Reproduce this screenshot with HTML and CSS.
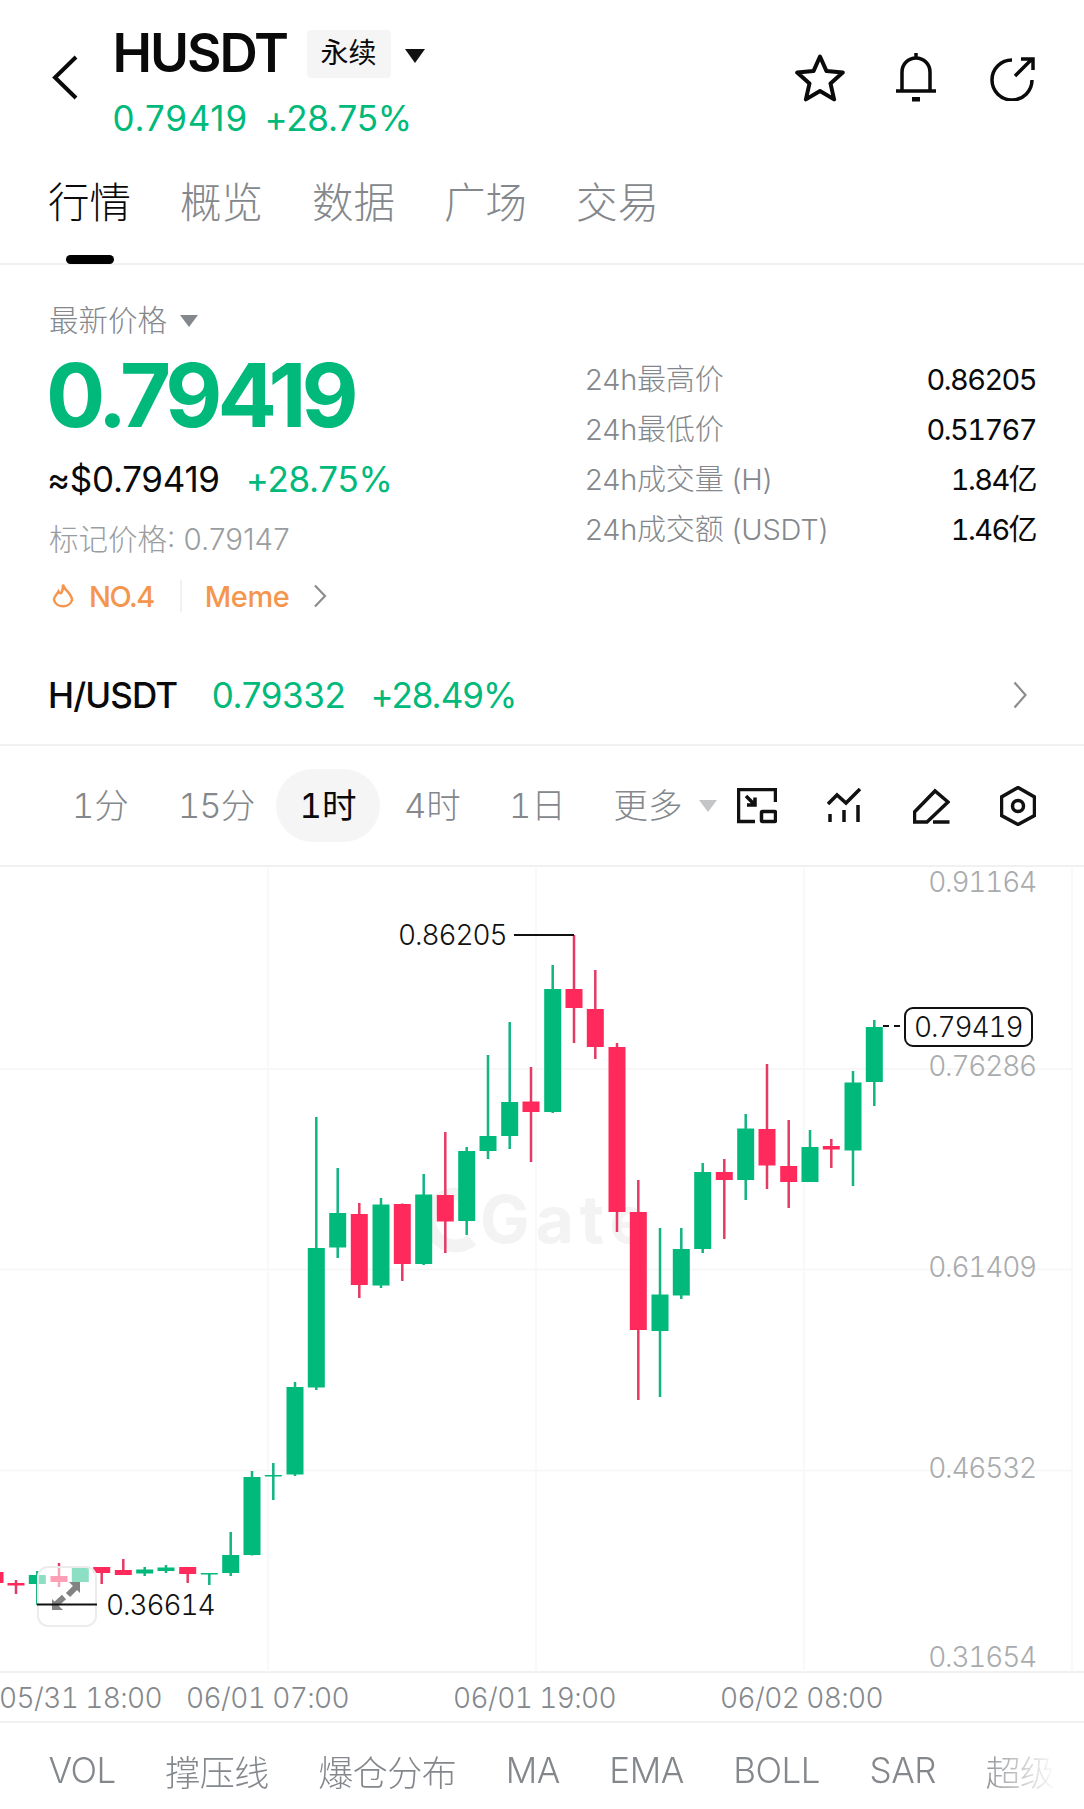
FILE: index.html
```html
<!DOCTYPE html>
<html lang="zh-CN">
<head>
  <meta charset="UTF-8" />
  <meta name="viewport" content="width=device-width, initial-scale=1.0"/>
  <title>HUSDT 永续</title>
  <link rel="stylesheet" href="styles.css">
</head>
<body>

  <header class="topbar">
    <svg class="back" width="26" height="45" viewBox="0 0 26 45"><path d="M24 2 3 22.5 24 43" /></svg>
    <div class="title-block">
      <div class="title-line">
        <span class="symbol">HUSDT</span>
        <span class="badge">永续</span>
        <span class="caret caret-dark"></span>
      </div>
      <div class="quote-line up">
        <span class="quote-price">0.79419</span>
        <span>+28.75%</span>
      </div>
    </div>
    <div class="top-actions">
      <svg class="ic-star" width="50" height="48" viewBox="0 0 50 48"><path d="M25 2.500 31.500 17.100 47.800 18.600 35.500 29.400 39.100 45.400 25 37 10.900 45.400 14.500 29.400 2.200 18.600 18.500 17.100Z" /></svg>
      <svg class="ic-bell" width="42" height="50" viewBox="0 0 42 50"><path d="M21 1V6M7 38V20a14 14 0 0 1 28 0V38M1 39H41" /><rect class="solid" x="17" y="45" width="8" height="4.500" /></svg>
      <svg class="ic-share" width="46" height="44" viewBox="0 0 46 44"><path d="M22 3A20 20 0 1 0 42 23M25 19 42 2M31 2H43V13" /></svg>
    </div>
  </header>

  <nav class="tabs">
    <a class="tab active">行情</a>
    <a class="tab">概览</a>
    <a class="tab">数据</a>
    <a class="tab">广场</a>
    <a class="tab">交易</a>
  </nav>

  <section class="summary">
    <div class="summary-left">
      <div class="last-label">最新价格 <span class="caret caret-grey"></span></div>
      <div class="last-price">0.79419</div>
      <div class="fiat-line">
        <span>≈$0.79419</span>
        <span class="up">+28.75%</span>
      </div>
      <div class="mark-line">标记价格: 0.79147</div>
      <div class="tag-line">
        <svg class="flame" width="22" height="26" viewBox="0 0 22 26"><path d="M11 1.500C12 7 20 10.500 20 17a9.200 8 0 0 1-18 0C2 13 5 11.500 6.500 8.500 7.500 10.500 8.500 10.500 9.500 9.500 11 7 11 4.500 11 1.500Z" /></svg>
        <span class="tag-rank">NO.4</span>
        <span class="tag-sep"></span>
        <span class="tag-name">Meme</span>
        <svg class="chev chev-grey" width="14" height="24" viewBox="0 0 14 24"><path d="M2 1.500 12 12 2 22.500" /></svg>
      </div>
    </div>
    <dl class="stats">
      <div class="stat"><dt>24h最高价</dt><dd>0.86205</dd></div>
      <div class="stat"><dt>24h最低价</dt><dd>0.51767</dd></div>
      <div class="stat"><dt>24h成交量 (H)</dt><dd>1.84亿</dd></div>
      <div class="stat"><dt>24h成交额 (USDT)</dt><dd>1.46亿</dd></div>
    </dl>
  </section>

  <div class="pair-row">
    <span class="pair-name">H/USDT</span>
    <span class="up pair-price">0.79332</span>
    <span class="up pair-pct">+28.49%</span>
    <svg class="chev chev-light" width="14" height="28" viewBox="0 0 14 28"><path d="M1.500 1.500 12.500 14 1.500 26.500" /></svg>
  </div>

  <div class="period-row">
    <a class="period p-1m">1分</a>
    <a class="period p-15m">15分</a>
    <a class="period p-1h current">1时</a>
    <a class="period p-4h">4时</a>
    <a class="period p-1d">1日</a>
    <a class="period p-more">更多</a>
    <span class="caret caret-light"></span>
    <div class="chart-tools">
      <svg width="40" height="36" viewBox="0 0 40 36"><path d="M38.500 14V1.500H1.500V33.500H18M9 8 18 17M18 9.500V17H10" /><rect x="24.500" y="23.500" width="14" height="10" rx="1" /></svg>
      <svg width="36" height="36" viewBox="0 0 36 36"><path d="M1 16 10 7 19 15 33 1M3 26V34M17 22V34M31 17V34" /></svg>
      <svg width="37" height="36" viewBox="0 0 37 36"><path d="M1.500 24 22 3 35 14 14 34H1.500ZM20 34H36.500" /></svg>
      <svg width="36" height="40" viewBox="0 0 36 40"><path d="M18 1.500 34.500 11V29.500L18 38.500 1.500 29.500V11Z" /><circle cx="18" cy="20" r="5.500" /></svg>
    </div>
  </div>

  <div class="chart">
    <svg class="plot" width="1084" height="805" viewBox="0 867 1084 805">
      <g class="watermark">
        <path class="wm-ring" d="M472 1200A26 26 0 1 0 472 1240" />
        <text x="480" y="1243">Gate</text>
      </g>
      <path class="grid-h" d="M0 1069H1072M0 1269.500H1072M0 1470.500H1072" />
      <path class="grid-v" d="M268 867V1672M536 867V1672M804 867V1672M1072 867V1672" />
      <g id="candles"></g>
      <rect class="zoom-btn" x="38" y="1567" width="58" height="59" rx="10" />
      <path class="zoom-arrows" d="M68 1595 78 1585M53 1607 64 1597" />
      <path class="zoom-heads" d="M80 1582V1593L69 1582ZM52 1610V1599L63 1610Z" />
      <path class="hi-lo" d="M514 935H574M37 1604.500H97" />
      <path class="last-dash" d="M883 1026H902" />
      <rect class="last-box" x="905" y="1008" width="127" height="38" rx="8" />
      <text class="chart-label" x="398" y="945">0.86205</text>
      <text class="chart-label" x="106" y="1615">0.36614</text>
      <text class="chart-label" x="914" y="1037">0.79419</text>
      <text class="axis-label" x="1036" y="892">0.91164</text>
      <text class="axis-label" x="1036" y="1076">0.76286</text>
      <text class="axis-label" x="1036" y="1277">0.61409</text>
      <text class="axis-label" x="1036" y="1478">0.46532</text>
      <text class="axis-label" x="1036" y="1667">0.31654</text>
    </svg>
  </div>

  <div class="time-axis">
    <span class="t-a">05/31 18:00</span>
    <span class="t-b">06/01 07:00</span>
    <span class="t-c">06/01 19:00</span>
    <span class="t-d">06/02 08:00</span>
  </div>

  <div class="indicators">
    <a>VOL</a>
    <a>撑压线</a>
    <a>爆仓分布</a>
    <a>MA</a>
    <a>EMA</a>
    <a>BOLL</a>
    <a>SAR</a>
    <a>超级</a>
  </div>

  <script src="chart.js"></script>
</body>
</html>
```

FILE: styles.css
```css
:root {
  --green: #00b97a;
  --red: #ff2a5b;
  --text: #0a0a0a;
  --muted: #84888c;
  --soft: #9a9da0;
  --line: #f1f1f2;
  --orange: #f5964f;
}

* {
  box-sizing: border-box;
}

html, body {
  height: 1809px;
  overflow: hidden;
}

body {
  margin: 0;
  background: #fff;
  color: var(--text);
  font-family: Inter, "Noto Sans CJK SC", sans-serif;
}

svg {
  display: block;
  fill: none;
  stroke: currentColor;
  stroke-width: 3.5;
}

a {
  color: inherit;
}

.up {
  color: var(--green);
}

.caret {
  display: inline-block;
  width: 0;
  height: 0;
  border-left: 10px solid transparent;
  border-right: 10px solid transparent;
}

.caret-dark {
  margin-left: 14px;
  margin-top: 6px;
  border-top: 14px solid #111;
}

.caret-grey {
  margin-left: 13px;
  margin-top: 6px;
  border-left-width: 9px;
  border-right-width: 9px;
  border-top: 12px solid var(--muted);
}

.caret-light {
  margin-left: 16px;
  border-left-width: 9px;
  border-right-width: 9px;
  border-top: 12px solid #c4c5c7;
}

/* top bar */
.topbar {
  height: 150px;
  display: flex;
  padding: 0 48px 0 52px;
}

.back {
  margin-top: 55px;
  stroke-width: 4;
}

.title-block {
  margin-left: 34.500px;
  padding-top: 25px;
}

.title-line {
  display: flex;
  align-items: center;
  height: 56px;
}

.symbol {
  font-size: 53px;
  font-weight: 600;
  letter-spacing: -2px;
  line-height: 56px;
}

.badge {
  margin-left: 19.500px;
  margin-top: 2px;
  width: 84px;
  height: 48px;
  background: #f5f5f5;
  border-radius: 4px;
  font-size: 28px;
  line-height: 46px;
  text-align: center;
}

.quote-line {
  display: flex;
  gap: 16.500px;
  margin-top: 17px;
  font-size: 35px;
  line-height: 40px;
  letter-spacing: -0.2px;
}

.quote-price {
  letter-spacing: 0.800px;
}

.top-actions {
  margin-left: auto;
  display: flex;
  padding-top: 52px;
}

.ic-star {
  margin-top: 2px;
  stroke-width: 4;
  stroke-linejoin: round;
}

.ic-bell {
  margin-left: 50px;
}

.ic-share {
  margin-top: 5px;
  margin-left: 53px;
}

.solid {
  fill: currentColor;
  stroke: none;
}

/* main tabs */
.tabs {
  height: 115px;
  display: flex;
  gap: 49px;
  padding: 24px 0 0 48px;
  border-bottom: 2px solid var(--line);
}

.tab {
  position: relative;
  height: 59px;
  font-size: 41.500px;
  line-height: 59px;
  color: var(--muted);
  font-weight: 300;
}

.tab.active {
  color: var(--text);
}

.tab.active::after {
  content: "";
  position: absolute;
  left: 18px;
  top: 81px;
  width: 48px;
  height: 9px;
  border-radius: 5px;
  background: #000;
}

/* price summary */
.summary {
  height: 375px;
  display: flex;
  padding: 0 48px 0 49px;
}

.summary-left {
  width: 536px;
  padding-top: 35px;
}

.last-label {
  display: flex;
  align-items: center;
  height: 40px;
  padding-bottom: 4px;
  font-size: 29.500px;
  color: var(--muted);
  font-weight: 300;
}

.last-price {
  margin-top: 5px;
  margin-left: -3px;
  height: 100px;
  font-size: 88px;
  font-weight: 700;
  line-height: 100px;
  letter-spacing: -5px;
  color: var(--green);
}

.fiat-line {
  display: flex;
  gap: 26px;
  margin-top: 12px;
  margin-left: -2px;
  height: 44px;
  font-size: 35px;
  line-height: 44px;
  letter-spacing: -0.3px;
}

.mark-line {
  margin-top: 18px;
  height: 40px;
  font-size: 29.500px;
  line-height: 40px;
  color: var(--soft);
  font-weight: 300;
}

.tag-line {
  display: flex;
  align-items: center;
  margin-top: 17px;
  height: 40px;
  font-size: 29px;
  font-weight: 500;
  color: var(--orange);
  letter-spacing: -0.4px;
}

.flame {
  margin-left: 3px;
  stroke-width: 2.500;
}

.tag-rank {
  margin-left: 15px;
  letter-spacing: -1.500px;
}

.tag-sep {
  margin: 0 23px 0 26px;
  width: 2px;
  height: 32px;
  background: var(--line);
}

.chev {
  stroke-width: 2.200;
}

.chev-grey {
  margin-left: 24px;
  color: #8b8d90;
}

.stats {
  flex: 1;
  margin: 0;
  padding-top: 90px;
}

.stat {
  display: flex;
  justify-content: space-between;
  height: 50px;
  font-size: 29px;
  line-height: 50px;
}

.stat dt {
  color: var(--muted);
  font-weight: 300;
  letter-spacing: -0.2px;
}

.stat dd {
  margin: 0;
  letter-spacing: -1.600px;
  font-variant-numeric: tabular-nums;
}

/* spot pair */
.pair-row {
  height: 106px;
  display: flex;
  align-items: center;
  padding: 6px 57px 0 48px;
  border-bottom: 2px solid var(--line);
  font-size: 35px;
  letter-spacing: -0.4px;
}

.pair-name {
  font-weight: 500;
  letter-spacing: -0.900px;
}

.pair-price {
  margin-left: 34.500px;
}

.pair-pct {
  margin-left: 25px;
  letter-spacing: -1px;
}

.chev-light {
  margin-left: auto;
  color: #8b8d90;
}

/* period row */
.period-row {
  height: 121px;
  display: flex;
  align-items: center;
  padding: 0 48px 0 0;
  border-bottom: 2px solid var(--line);
  font-size: 34.500px;
  color: var(--muted);
  font-weight: 300;
  font-variant-numeric: tabular-nums;
}

.period {
  display: block;
  flex: none;
  text-align: center;
  white-space: nowrap;
  line-height: 73px;
  height: 73px;
}

.p-1m {
  margin-left: 72px;
  width: 53px;
}

.p-15m {
  margin-left: 53px;
  width: 71px;
  letter-spacing: -1px;
}

.p-1h {
  margin-left: 27px;
  width: 104px;
  border-radius: 37px;
  background: #f5f5f5;
}

.p-1h.current {
  color: var(--text);
  font-weight: 400;
}

.p-4h {
  margin-left: 24px;
  width: 55px;
}

.p-1d {
  margin-left: 50px;
  width: 50px;
}

.p-more {
  margin-left: 54px;
  width: 70px;
}

.chart-tools {
  margin-left: auto;
  display: flex;
  gap: 50px;
  align-items: center;
  color: #111;
}

/* chart */
.chart {
  height: 806px;
  border-bottom: 2px solid var(--line);
}

.plot {
  stroke: none;
  overflow: visible;
}

.watermark {
  fill: #f3f3f3;
  font-size: 66px;
  font-weight: 700;
  letter-spacing: 6px;
}

.wm-ring {
  fill: none;
  stroke: #f3f3f3;
  stroke-width: 13;
}

.grid-h {
  stroke: #f5f5f6;
  stroke-width: 1.500;
}

.grid-v {
  stroke: #f8f8f9;
  stroke-width: 1.500;
}

.zoom-btn {
  fill: rgba(255, 255, 255, 0.55);
  stroke: #ececec;
  stroke-width: 2;
}

.zoom-arrows {
  stroke: #838383;
  stroke-width: 6;
}

.zoom-heads {
  fill: #838383;
}

.hi-lo {
  stroke: #111;
  stroke-width: 1.800;
}

.last-dash {
  stroke: #111;
  stroke-width: 1.800;
  stroke-dasharray: 6 5;
}

.last-box {
  fill: #fff;
  stroke: #111;
  stroke-width: 2;
}

.chart-label,
.axis-label {
  font-size: 28px;
  font-variant-numeric: tabular-nums;
}

.chart-label {
  fill: #111;
  font-weight: 300;
  letter-spacing: -1.100px;
}

.axis-label {
  fill: #a9abad;
  font-weight: 300;
  text-anchor: end;
  letter-spacing: -1.200px;
}

.wick-up {
  fill: #12b482;
}

.wick-down {
  fill: #e43a63;
}

.body-up {
  fill: var(--green);
}

.body-down {
  fill: var(--red);
}

/* time axis */
.time-axis {
  position: relative;
  height: 50px;
  border-bottom: 2px solid var(--line);
  font-size: 28px;
  line-height: 50px;
  color: var(--muted);
  font-weight: 300;
  letter-spacing: -0.600px;
  font-variant-numeric: tabular-nums;
}

.time-axis span {
  position: absolute;
  top: 0;
}

.t-a { left: -1px; }
.t-b { left: 186px; }
.t-c { left: 453px; }
.t-d { left: 720px; }

/* indicator strip */
.indicators {
  height: 86px;
  display: flex;
  align-items: center;
  gap: 49.500px;
  padding: 8px 0 0 48.500px;
  font-size: 35px;
  letter-spacing: -0.5px;
  color: var(--muted);
  white-space: nowrap;
  font-weight: 300;
  mask-image: linear-gradient(to right, #000 90%, transparent 97.500%);
}
```

FILE: chart.js
```js
// [x, wick top, body top, body bottom, wick bottom, up?]
const bars = [
  [-5, 1568, 1572, 1583, 1583, 0],
  [16, 1580, 1583, 1585.5, 1594, 0],
  [37.3, 1571, 1575, 1584, 1605, 1],
  [59, 1563, 1576, 1582, 1587, 0],
  [80.3, 1566, 1567, 1582, 1582, 1],
  [101.7, 1567, 1567, 1573, 1584, 0],
  [123.3, 1559, 1570, 1575, 1575, 0],
  [144.7, 1567, 1569.5, 1573.5, 1576, 1],
  [166, 1565, 1567.5, 1571, 1573, 1],
  [187.7, 1567, 1567, 1574, 1583, 0],
  [209.3, 1573, 1573, 1574.5, 1585, 1],
  [230.7, 1532, 1555, 1573, 1576, 1],
  [252, 1471, 1477, 1555, 1555.5, 1],
  [273.3, 1463, 1475, 1476.5, 1500, 1],
  [295, 1382, 1387, 1474.5, 1476, 1],
  [316.3, 1117, 1248, 1387.5, 1390, 1],
  [337.7, 1168, 1213, 1247.5, 1258, 1],
  [359.3, 1203, 1214, 1285, 1298, 0],
  [381, 1198, 1204.5, 1285.5, 1288, 1],
  [402.3, 1203.5, 1204, 1264, 1281, 0],
  [423.7, 1174, 1194.5, 1264, 1265, 1],
  [445.3, 1132, 1195, 1221.5, 1253, 0],
  [466.7, 1147, 1151, 1221, 1235, 1],
  [488, 1055, 1136, 1151, 1159, 1],
  [509.7, 1022, 1102, 1136, 1149, 1],
  [531, 1067, 1101.5, 1112, 1162, 0],
  [552.7, 965, 989, 1112, 1113, 1],
  [574, 935, 989, 1008, 1043, 0],
  [595.3, 970, 1009, 1047, 1059, 0],
  [617, 1043, 1047, 1212, 1232, 0],
  [638.3, 1180, 1212, 1330, 1400, 0],
  [660, 1228, 1294.5, 1331, 1397, 1],
  [681.3, 1228, 1249, 1295.5, 1299, 1],
  [702.7, 1163, 1172, 1249, 1253, 1],
  [724.3, 1159, 1172, 1180, 1239, 0],
  [745.7, 1114, 1128.5, 1180, 1200, 1],
  [767, 1064, 1129, 1165.5, 1189, 0],
  [788.7, 1120, 1166, 1182, 1208, 0],
  [810, 1130, 1147, 1182, 1182, 1],
  [831.3, 1139, 1146, 1149.5, 1168, 0],
  [853, 1071, 1082.5, 1150.5, 1186, 1],
  [874.3, 1020, 1027, 1082, 1106, 1]
];

const group = document.getElementById("candles");
const NS = "http://www.w3.org/2000/svg";

function addRect(x, y, w, h, cls) {
  const r = document.createElementNS(NS, "rect");
  r.setAttribute("x", x);
  r.setAttribute("y", y);
  r.setAttribute("width", w);
  r.setAttribute("height", h);
  r.setAttribute("class", cls);
  group.appendChild(r);
}

bars.forEach(function (b) {
  const side = b[5] ? "up" : "down";
  addRect(b[0] - 1.25, b[1], 2.5, b[4] - b[1], "wick-" + side);
  addRect(b[0] - 8.5, b[2], 17, b[3] - b[2], "body-" + side);
});
```
